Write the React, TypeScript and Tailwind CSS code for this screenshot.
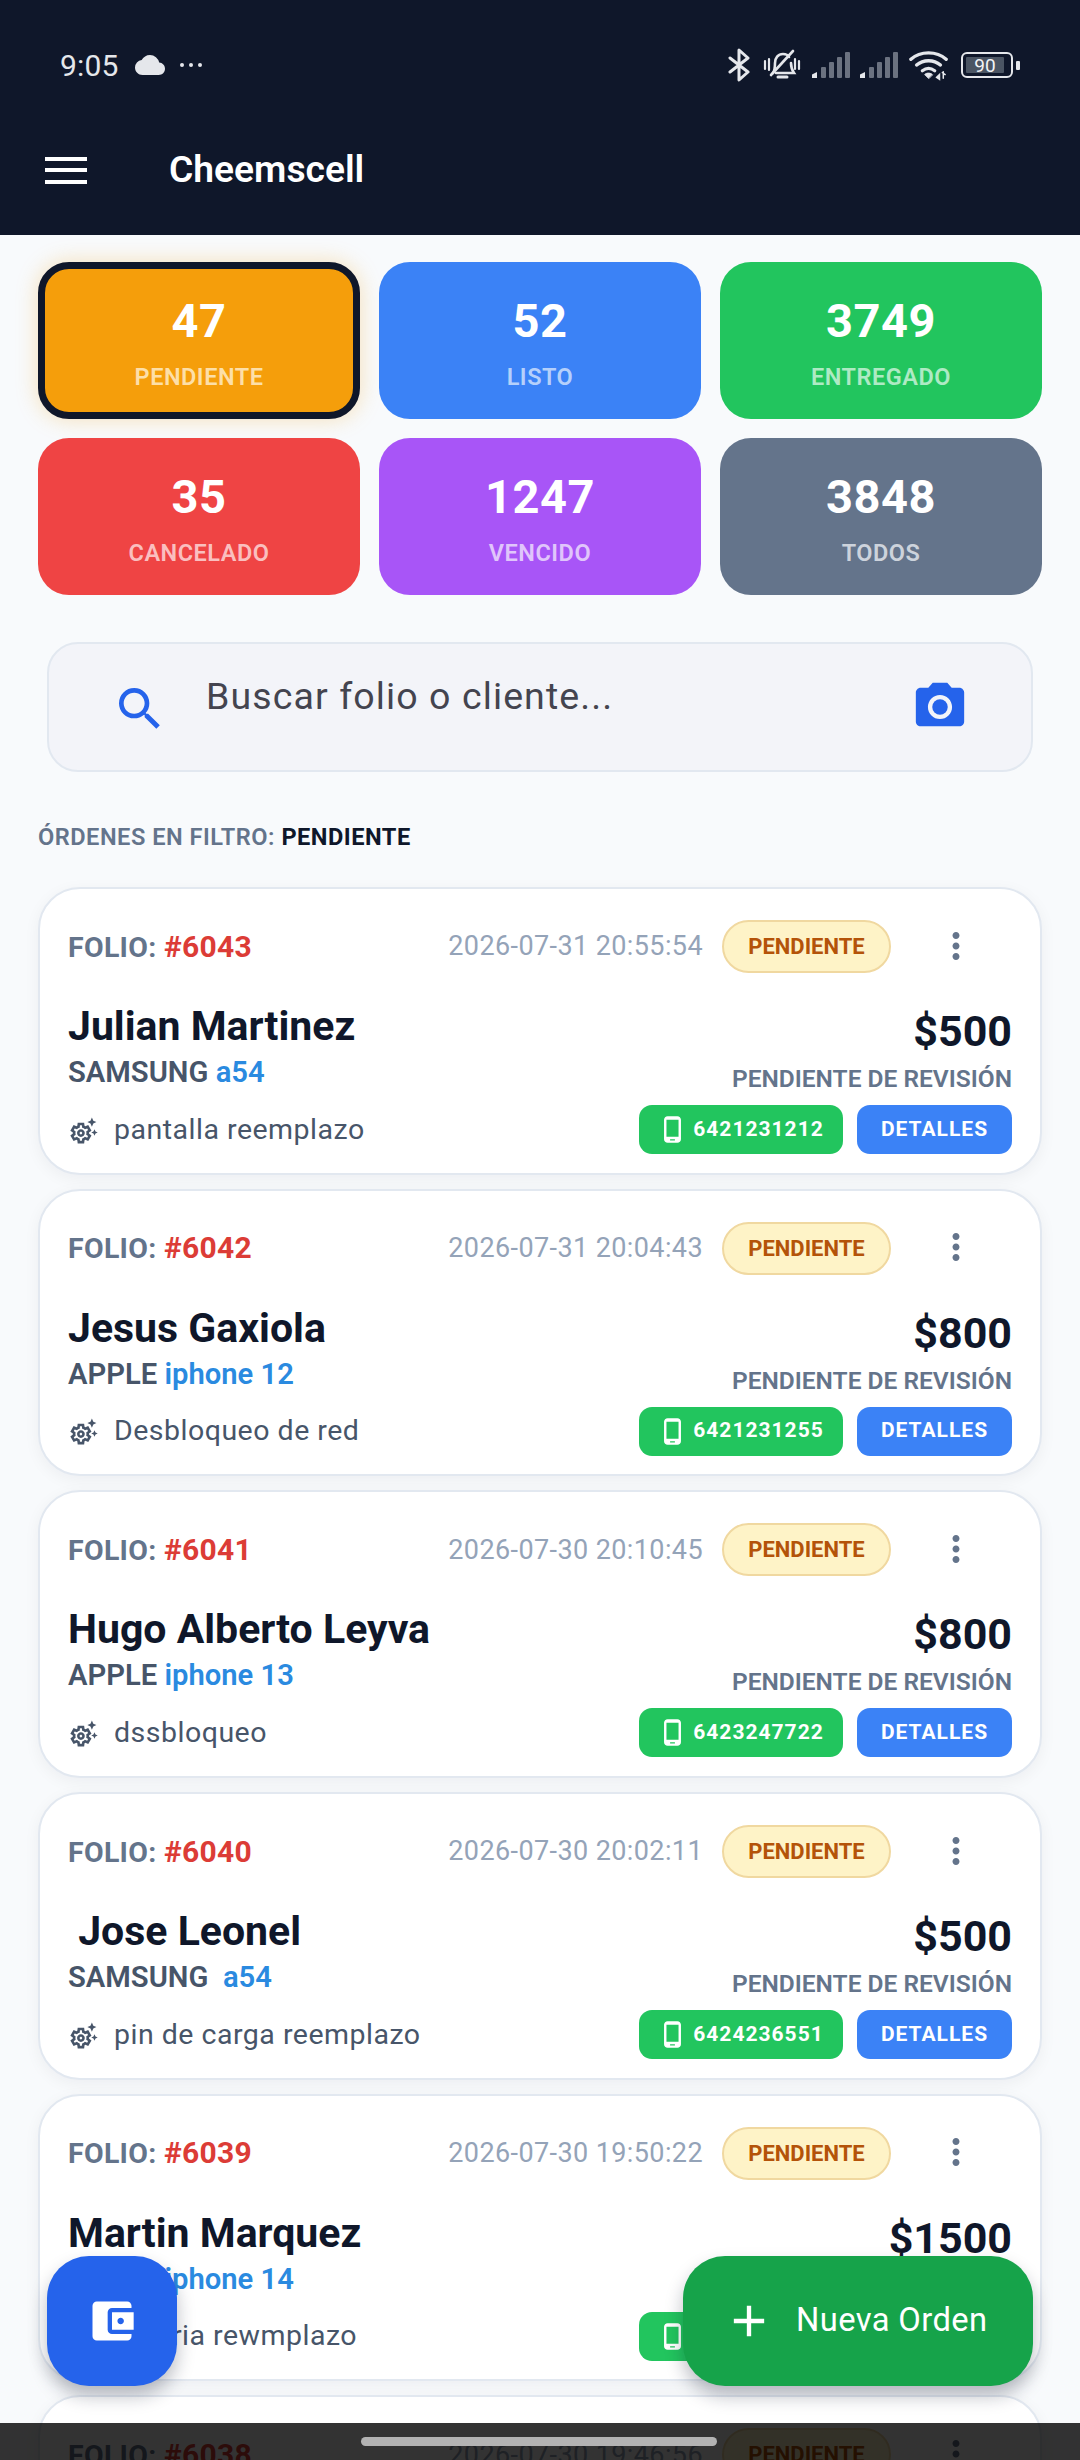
import React from "react";
import { MdCloud, MdSearch, MdPhotoCamera, MdMoreVert, MdOutlineSettingsSuggest, MdOutlinePhoneAndroid, MdAccountBalanceWallet, MdAdd } from "react-icons/md";

const stats = [
  { n: "47", l: "PENDIENTE", c: "bg-[#f59e0b] border-[7px] border-[#0f172a] shadow-[0_0_22px_rgba(245,158,11,0.28)]", t: "text-[#fddfa8]" },
  { n: "52", l: "LISTO", c: "bg-[#3b82f6]", t: "text-[#b5d0fb]" },
  { n: "3749", l: "ENTREGADO", c: "bg-[#22c55e]", t: "text-[#aeeac4]" },
  { n: "35", l: "CANCELADO", c: "bg-[#ef4444]", t: "text-[#fabfbf]" },
  { n: "1247", l: "VENCIDO", c: "bg-[#a855f7]", t: "text-[#e0c5fb]" },
  { n: "3848", l: "TODOS", c: "bg-[#64748b]", t: "text-[#cdd3dc]" },
];

const orders = [
  { f: "#6043", d: "2026-07-31 20:55:54", name: "Julian Martinez", b: "SAMSUNG ", m: "a54", desc: "pantalla reemplazo", p: "$500", tel: "6421231212" },
  { f: "#6042", d: "2026-07-31 20:04:43", name: "Jesus Gaxiola", b: "APPLE ", m: "iphone 12", desc: "Desbloqueo de red", p: "$800", tel: "6421231255" },
  { f: "#6041", d: "2026-07-30 20:10:45", name: "Hugo Alberto Leyva", b: "APPLE ", m: "iphone 13", desc: "dssbloqueo", p: "$800", tel: "6423247722" },
  { f: "#6040", d: "2026-07-30 20:02:11", name: " Jose Leonel", b: "SAMSUNG  ", m: "a54", desc: "pin de carga reemplazo", p: "$500", tel: "6424236551" },
  { f: "#6039", d: "2026-07-30 19:50:22", name: "Martin Marquez", b: "APPLE ", m: "iphone 14", desc: "bateria rewmplazo", p: "$1500", tel: "6421231200" },
  { f: "#6038", d: "2026-07-30 19:46:56", name: "Luis Perez", b: "APPLE ", m: "iphone 11", desc: "pantalla", p: "$900", tel: "6421231201" },
];

function Signal() {
  return (
    <svg width="38" height="26" viewBox="0 0 38 26" fill="#6b7280">
      <path d="M0 26v-3.5l5-2.5v6z" fill="#e5e7eb" />
      <rect x="9" y="15" width="5" height="11" rx="1" />
      <rect x="17" y="10" width="5" height="16" rx="1" />
      <rect x="25" y="5" width="5" height="21" rx="1" />
      <rect x="33" y="0" width="5" height="26" rx="1" />
    </svg>
  );
}

function StatusIcons() {
  return (
    <div className="flex items-center">
      <svg width="22" height="34" viewBox="0 0 22 34" fill="none" stroke="#e5e7eb" strokeWidth="3" strokeLinejoin="round" strokeLinecap="round">
        <path d="M2 10l18 14-9 8V2l9 8-18 14" />
      </svg>
      <svg width="38" height="34" viewBox="0 0 38 34" fill="none" stroke="#e5e7eb" strokeWidth="2.6" strokeLinecap="round" className="ml-[13px]">
        <path d="M10 25c2-3 2-6 2-10 0-5 3-9 8-9 3 0 5 1 6 3M28 15c0 4 1 7 3 10H13" />
        <path d="M15 29h9" strokeWidth="3" />
        <path d="M8 27L30 3" />
        <path d="M2 13v8M6 11v11M32 11v10M36 13v8" strokeWidth="2.2" />
      </svg>
      <div className="ml-[11px]"><Signal /></div>
      <div className="ml-[10px]"><Signal /></div>
      <svg width="40" height="32" viewBox="0 0 42 32" fill="none" stroke="#e5e7eb" strokeLinecap="round" className="ml-[11px]">
        <path d="M2 10c10-9 27-9 37 0" strokeWidth="3.6" />
        <path d="M8 16c7-6 18-6 25 0" strokeWidth="3.6" />
        <path d="M14 22c4-3 9-3 13 0" strokeWidth="3.4" />
        <path d="M20.5 30l-4-4c2-2 6-2 8 0z" fill="#e5e7eb" strokeWidth="1" />
        <path d="M29 29l3-3v5zM36 23v7M35 24l3 2" strokeWidth="1.6" fill="#e5e7eb" />
      </svg>
      <div className="ml-[12px] flex items-center">
        <div className="w-[52px] h-[26px] rounded-[6px] border-[2px] border-[#e5e7eb] p-[3px] flex">
          <div className="w-[38px] h-full bg-[#4b5563] flex items-center justify-center text-[19px] leading-none text-[#f3f4f6] rounded-[1px]">90</div>
        </div>
        <div className="w-[4px] h-[9px] bg-[#e5e7eb] ml-[3px] rounded-[1px]" />
      </div>
    </div>
  );
}

function OrderCard({ o }: { o: (typeof orders)[number] }) {
  return (
    <div className="w-full h-[287.5px] shrink-0 bg-white rounded-[42px] border-2 border-[#e2e8f0] shadow-[0_4px_16px_rgba(15,23,42,0.05)] pt-[31px] pl-[28px] pr-[28px] flex flex-col">
      <div className="flex items-center h-[53px]">
        <div className="text-[28.5px] font-bold text-[#64748b] tracking-[0.3px] whitespace-pre">
          FOLIO: <span className="text-[30px] text-[#dc3c36]">{o.f}</span>
        </div>
        <div className="ml-auto text-[27px] text-[#94a3b8] tracking-[0.4px] whitespace-pre">{o.d}</div>
        <div className="ml-[19px] w-[169px] h-[53px] rounded-full bg-[#fef3c7] border-2 border-[#f0d8a0] flex items-center justify-center text-[22px] font-bold text-[#b45309]">PENDIENTE</div>
        <div className="w-[84px] h-[53px] ml-[23px] mr-[14px] flex items-center justify-center -translate-y-[1px]">
          <MdMoreVert size={42} color="#64748b" />
        </div>
      </div>
      <div className="flex justify-between mt-[28px]">
        <div className="flex flex-col">
          <div className="text-[41px] leading-[50px] font-bold text-[#0f172a] whitespace-pre">{o.name}</div>
          <div className="text-[29.2px] leading-[36px] mt-[3px] font-semibold text-[#475569] whitespace-pre">
            {o.b}<span className="text-[#2a8ae0]">{o.m}</span>
          </div>
          <div className="flex items-center mt-[20px] h-[40px]">
            <MdOutlineSettingsSuggest size={31} color="#475569" />
            <span className="ml-[15px] text-[28.5px] tracking-[0.5px] text-[#475569]">{o.desc}</span>
          </div>
        </div>
        <div className="flex flex-col items-end">
          <div className="text-[43px] leading-[50px] mt-[5px] font-bold text-[#0f172a]">{o.p}</div>
          <div className="text-[24.5px] leading-[32px] mt-[7px] font-semibold text-[#64748b]">PENDIENTE DE REVISIÓN</div>
          <div className="flex gap-[14px] mt-[10px]">
            <div className="w-[204px] h-[49px] rounded-[13px] bg-[#22c55e] flex items-center justify-center text-white text-[21px] font-bold tracking-[1px]">
              <MdOutlinePhoneAndroid size={29} className="mr-[6px]" />{o.tel}
            </div>
            <div className="w-[155px] h-[49px] rounded-[13px] bg-[#3b82f6] flex items-center justify-center text-white text-[21px] font-bold tracking-[1px]">DETALLES</div>
          </div>
        </div>
      </div>
    </div>
  );
}

export default function App() {
  return (
    <div className="relative w-[1080px] h-[2460px] overflow-hidden bg-[#f8fafc] font-['Roboto',sans-serif]">
      <header className="h-[235px] bg-[#0f172a] flex flex-col">
        <div className="h-[130px] pl-[60px] pr-[60px] flex items-center justify-between">
          <div className="flex items-center text-[#e5e7eb]">
            <span className="text-[30px] tracking-[0.2px]">9:05</span>
            <MdCloud size={30} className="ml-[16px]" />
            <span className="ml-[15px] flex gap-[5px]">
              <i className="w-[4px] h-[4px] rounded-full bg-[#e5e7eb]" />
              <i className="w-[4px] h-[4px] rounded-full bg-[#e5e7eb]" />
              <i className="w-[4px] h-[4px] rounded-full bg-[#e5e7eb]" />
            </span>
          </div>
          <StatusIcons />
        </div>
        <div className="flex items-center pl-[45px] h-[80px]">
          <div className="w-[42px] h-[27px] flex flex-col justify-between">
            <div className="h-[4px] bg-white" />
            <div className="h-[4px] bg-white" />
            <div className="h-[4px] bg-white" />
          </div>
          <div className="ml-[82px] text-[37.2px] font-semibold text-white">Cheemscell</div>
        </div>
      </header>

      <main className="px-[38px] pt-[27px]">
        <div className="grid grid-cols-3 gap-[19px]">
          {stats.map((s) => (
            <div key={s.l} className={`h-[157px] rounded-[31px] flex flex-col items-center justify-center ${s.c}`}>
              <div className="text-[47px] leading-[55px] mt-[3px] font-bold text-white tracking-[0.5px]">{s.n}</div>
              <div className={`text-[23.5px] leading-[28px] mt-[15px] font-semibold tracking-[0.5px] ${s.t}`}>{s.l}</div>
            </div>
          ))}
        </div>

        <div className="mx-[9px] mt-[47px] h-[130px] rounded-[31px] bg-[#f3f4f9] border-2 border-[#e2e8f0] flex items-center pl-[63px] pr-[62px]">
          <MdSearch size={56} color="#2563eb" className="mt-[4px]" />
          <div className="ml-[38px] text-[37.5px] tracking-[1.1px] text-[#44444f] -mt-[22px]">Buscar folio o cliente...</div>
          <MdPhotoCamera size={58} color="#2563eb" className="ml-auto" />
        </div>

        <div className="mt-[51px] text-[23.6px] leading-[28px] font-semibold text-[#64748b] tracking-[0.5px] whitespace-pre">
          ÓRDENES EN FILTRO: <span className="font-bold text-[#0f172a]">PENDIENTE</span>
        </div>

        <div className="mt-[36px] flex flex-col gap-[14.2px]">
          {orders.map((o) => (
            <OrderCard key={o.f} o={o} />
          ))}
        </div>
      </main>

      <div className="absolute left-[47px] top-[2256px] w-[130px] h-[130px] rounded-[42px] bg-[#2563eb] flex items-center justify-center shadow-[0_10px_18px_rgba(15,23,42,0.28)]">
        <MdAccountBalanceWallet size={52} color="#fff" />
      </div>
      <div className="absolute left-[683px] top-[2256px] w-[350px] h-[130px] rounded-[42px] bg-[#16a34a] flex items-center pl-[40px] text-white shadow-[0_10px_18px_rgba(15,23,42,0.28)]">
        <MdAdd size={52} />
        <span className="ml-[21px] text-[32.7px] font-normal tracking-[0.4px]">Nueva Orden</span>
      </div>

      <div className="absolute left-0 right-0 bottom-0 h-[37px] bg-black/80">
        <div className="absolute left-[361px] top-[14px] w-[356px] h-[9px] rounded-full bg-[#b3b3b3]" />
      </div>
    </div>
  );
}
